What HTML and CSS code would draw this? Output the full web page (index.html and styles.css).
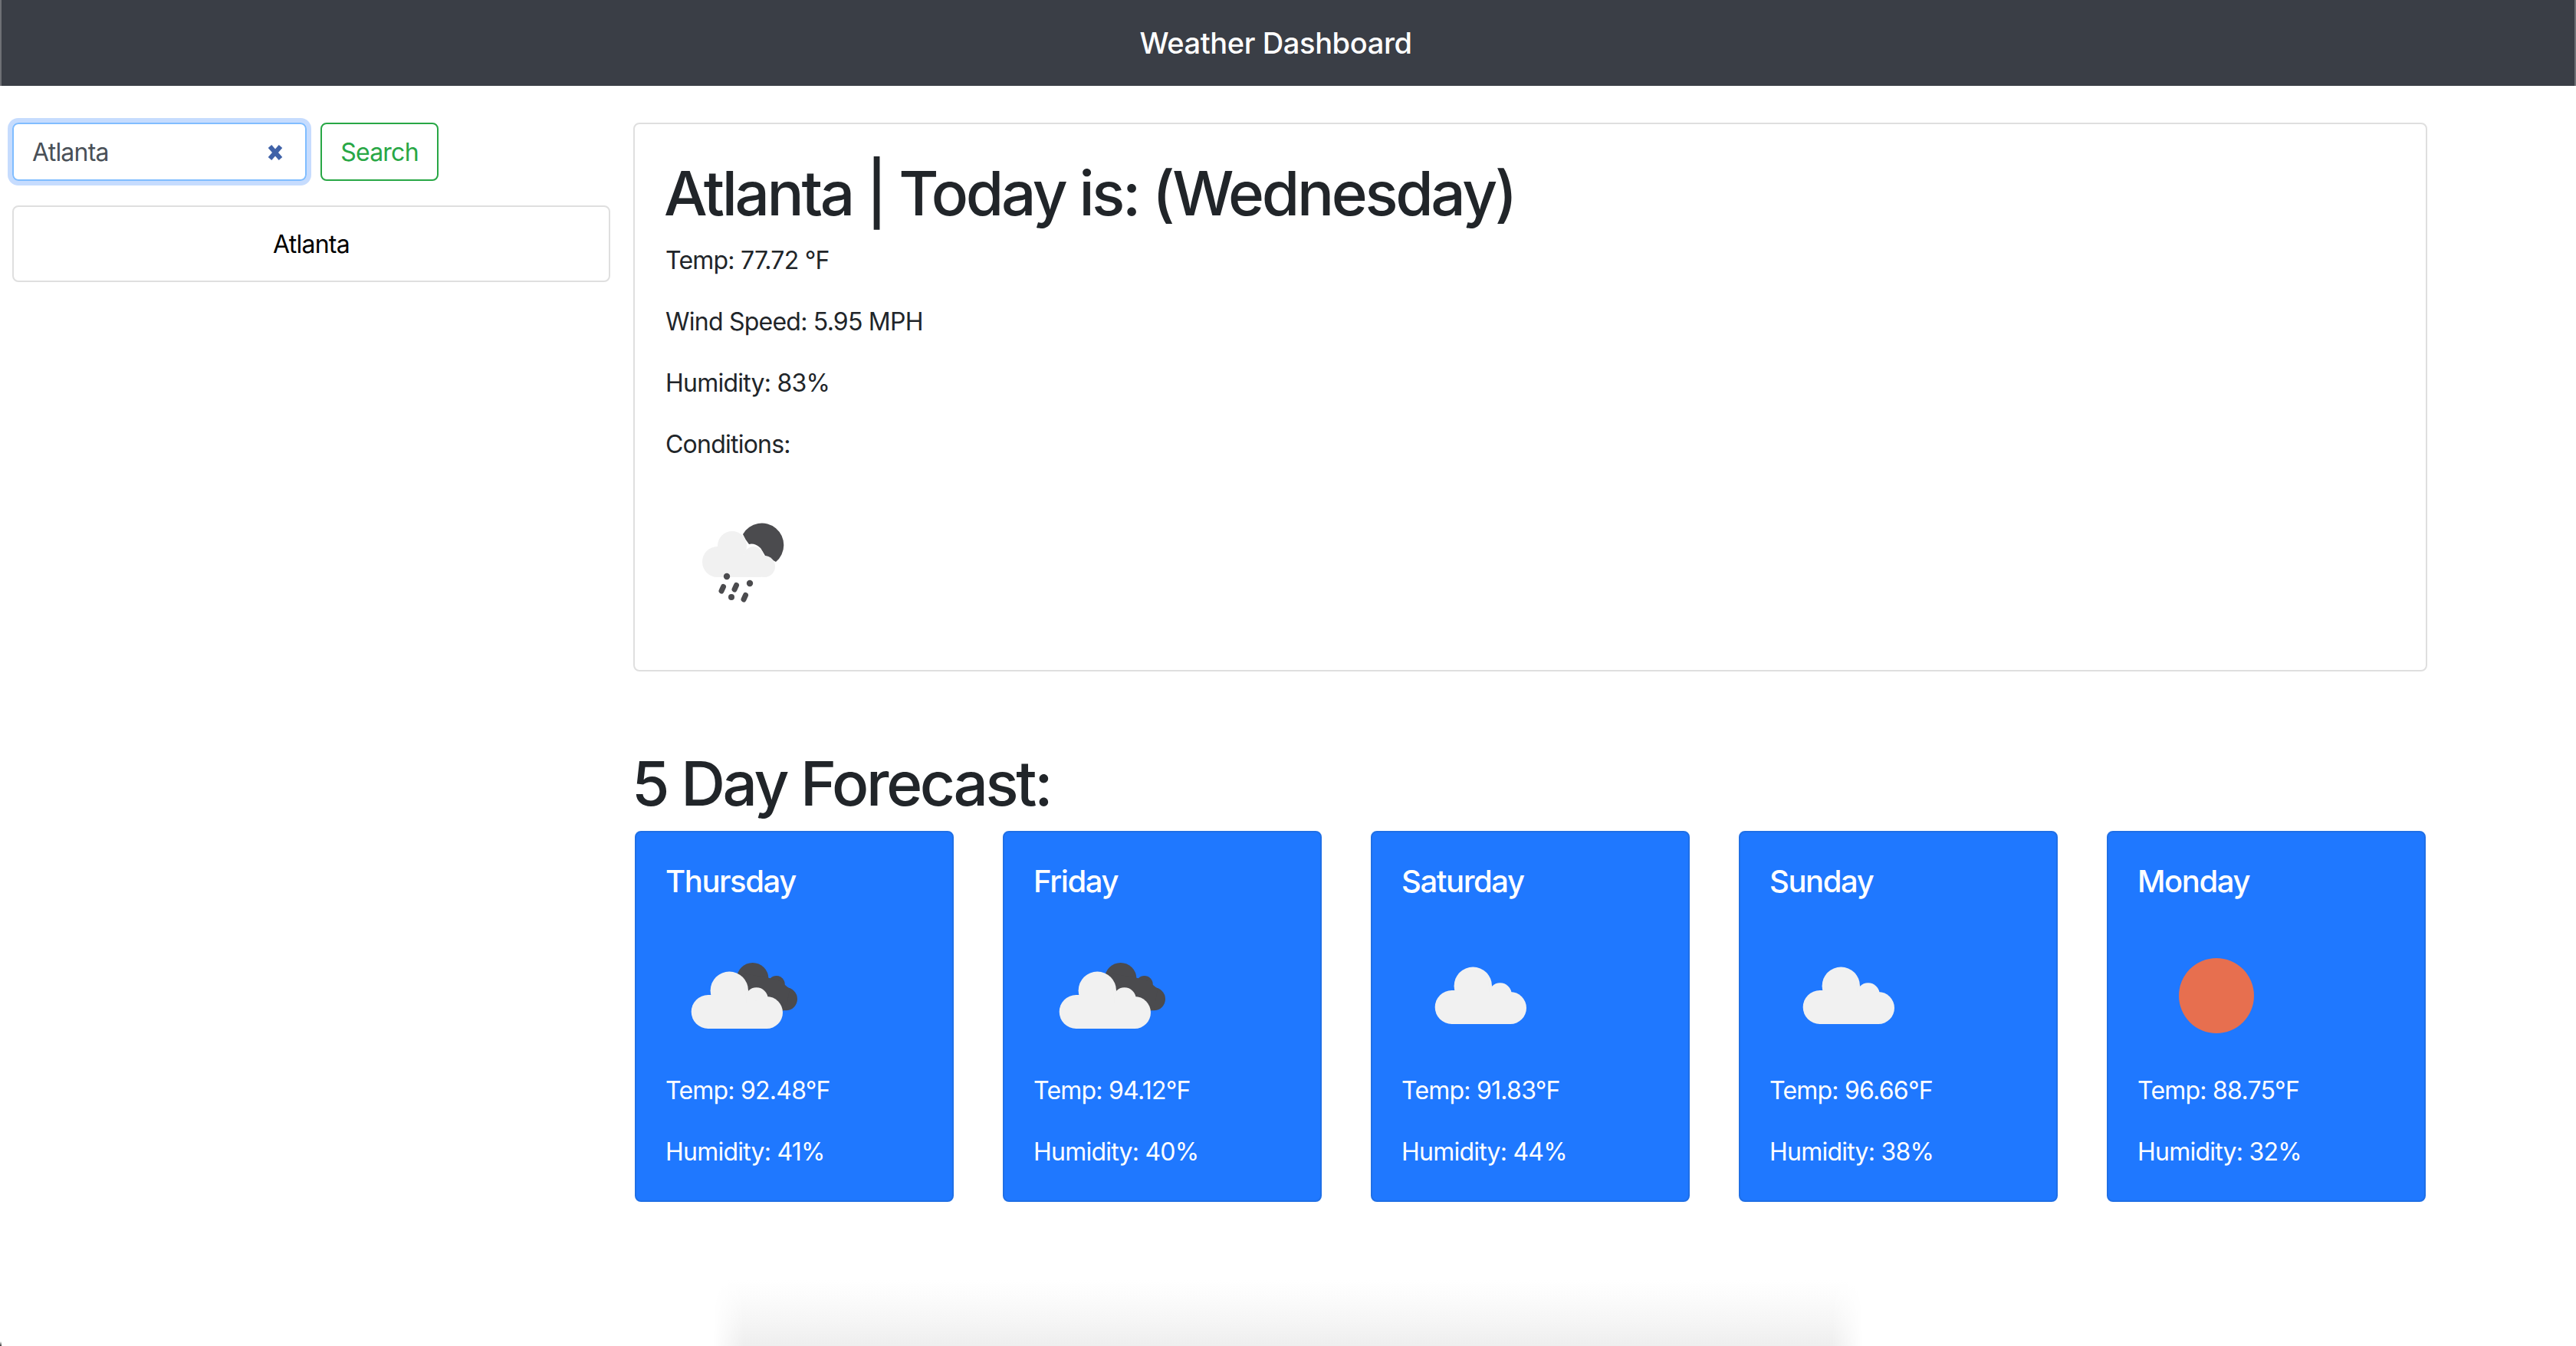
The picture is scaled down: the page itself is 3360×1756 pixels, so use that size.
FILE: index.html
```html
<!DOCTYPE html>
<html lang="en">
<head>
<meta charset="utf-8">
<title>Weather Dashboard</title>
<link rel="stylesheet" href="styles.css">
</head>
<body>
<svg class="defs" width="0" height="0" aria-hidden="true">
  <defs>
    <symbol id="cloud" viewBox="0 0 200 200">
      <circle cx="53.7" cy="130" r="22"/>
      <circle cx="81.3" cy="102.3" r="24.7"/>
      <circle cx="116.7" cy="113.3" r="15"/>
      <circle cx="130" cy="131" r="21"/>
      <path d="M54 108H78V88H100L104 118H130V152H54Z"/>
    </symbol>
    <symbol id="back-cloud" viewBox="0 0 200 200">
      <circle cx="111.7" cy="86.7" r="20.7"/>
      <circle cx="142.7" cy="94" r="11"/>
      <circle cx="155" cy="113.3" r="15"/>
      <path d="M100 80L130 85L148 90L160 100L155 128L135 130L100 110Z"/>
    </symbol>
  </defs>
</svg>
<header class="navbar">Weather Dashboard</header>
<div class="layout">
  <aside class="sidebar">
    <form class="search">
      <div class="field"><span>Atlanta</span>
        <svg class="clear" viewBox="0 0 22 22"><path d="M4 3L18 19M18 3L4 19"/></svg>
      </div>
      <button class="btn" type="button">Search</button>
    </form>
    <div class="history">Atlanta</div>
  </aside>
  <main class="main">
    <section class="today">
      <h1>Atlanta | Today is: (Wednesday)</h1>
      <p>Temp: 77.72 °F</p>
      <p>Wind Speed: 5.95 MPH</p>
      <p>Humidity: 83%</p>
      <p>Conditions:</p>
      <svg class="icon icon-now" viewBox="0 0 200 200">
        <path class="dark" d="M101 63A28.5 28.5 0 1 1 144 99L130 91Q126 84 124 81Q116 74 109 76Q104 70 101 63Z"/>
        <g class="light">
          <circle cx="68" cy="99" r="20"/>
          <circle cx="87" cy="78" r="19"/>
          <circle cx="115" cy="92" r="13"/>
          <circle cx="129" cy="105" r="14"/>
          <path d="M68 82H100V90H125V119H68Z"/>
        </g>
        <g class="dark">
          <circle cx="80" cy="118" r="4.2"/>
          <circle cx="110" cy="127" r="4.2"/>
          <circle cx="86" cy="145" r="4"/>
        </g>
        <g class="rain">
          <path d="M75.5 131.5L73 137M92.5 129.5L90 135M104.5 142.5L102 148"/>
        </g>
      </svg>
    </section>
    <h2>5 Day Forecast:</h2>
    <div class="forecast">
      <article class="day"><h3>Thursday</h3>
        <svg class="icon" viewBox="0 0 200 200"><use href="#back-cloud" class="dark"/><use href="#cloud" class="light"/></svg>
        <p>Temp: 92.48°F</p><p>Humidity: 41%</p></article>
      <article class="day"><h3>Friday</h3>
        <svg class="icon" viewBox="0 0 200 200"><use href="#back-cloud" class="dark"/><use href="#cloud" class="light"/></svg>
        <p>Temp: 94.12°F</p><p>Humidity: 40%</p></article>
      <article class="day"><h3>Saturday</h3>
        <svg class="icon" viewBox="0 0 200 200"><use href="#cloud" class="light" x="10" y="-6"/></svg>
        <p>Temp: 91.83°F</p><p>Humidity: 44%</p></article>
      <article class="day"><h3>Sunday</h3>
        <svg class="icon" viewBox="0 0 200 200"><use href="#cloud" class="light" x="10" y="-6"/></svg>
        <p>Temp: 96.66°F</p><p>Humidity: 38%</p></article>
      <article class="day"><h3>Monday</h3>
        <svg class="icon" viewBox="0 0 200 200"><circle class="sun" cx="101" cy="109" r="49"/></svg>
        <p>Temp: 88.75°F</p><p>Humidity: 32%</p></article>
    </div>
  </main>
</div>
<div class="dock-shadow"></div>
<div class="window-corner"></div>
</body>
</html>
```
FILE: styles.css
```css
* { box-sizing: border-box; }
html, body { height: 100%; }
body {
  margin: 0;
  background: #fff;
  color: #212529;
  font-family: Inter, "Liberation Sans", sans-serif;
  font-size: 32px;
  line-height: 48px;
  letter-spacing: -0.024em;
  overflow: hidden;
  position: relative;
}
.defs { position: absolute; }
.navbar {
  height: 112px;
  background: #3a3e46;
  border-left: 2px solid #6e7075;
  border-right: 2px solid #6e7075;
  color: #fff;
  font-size: 38px;
  font-weight: 500;
  letter-spacing: -0.01em;
  display: flex;
  align-items: center;
  justify-content: center;
  padding-right: 32px;
}
.layout {
  display: flex;
  padding: 48px 194px 0 16px;
  gap: 30px;
}
.sidebar { width: 780px; flex: none; }
.search { display: flex; gap: 18px; }
.field {
  width: 384px;
  height: 76px;
  border: 2px solid #80bdff;
  border-radius: 8px;
  box-shadow: 0 0 0 6px #c6dcfe;
  color: #495057;
  padding: 2px 28px 0 24px;
  display: flex;
  align-items: center;
  justify-content: space-between;
}
.clear { width: 22px; height: 22px; fill: none; stroke: #3f62a8; stroke-width: 6px; }
.btn {
  width: 154px;
  height: 76px;
  border: 2px solid #28a745;
  border-radius: 8px;
  background: #fff;
  color: #28a745;
  font: inherit;
  letter-spacing: inherit;
  padding: 2px 0 0;
}
.history {
  margin-top: 32px;
  height: 100px;
  border: 2px solid #dfdfdf;
  border-radius: 8px;
  color: #000;
  padding-top: 2px;
  display: flex;
  align-items: center;
  justify-content: center;
}
.main { flex: 1; min-width: 0; }
.today {
  height: 716px;
  border: 2px solid #dfdfdf;
  border-radius: 8px;
  padding: 40px;
}
h1 {
  margin: 2px 0 16px -2px;
  font-size: 80px;
  line-height: 96px;
  font-weight: 500;
  letter-spacing: -0.0415em;
}
p { margin: 0 0 32px; }
.icon { display: block; width: 200px; height: 200px; overflow: hidden; }
.icon-now { filter: blur(0.7px); margin-top: -2px; }
.dark { fill: #4b4b4e; }
.light { fill: #f1f1f1; }
.rain { fill: none; stroke: #4b4b4e; stroke-width: 7px; stroke-linecap: round; }
.sun { fill: #e76f4f; }
h2 {
  margin: 98px 0 14px -2px;
  font-size: 80px;
  line-height: 96px;
  font-weight: 500;
  letter-spacing: -0.0415em;
}
.forecast { display: flex; gap: 64px; padding: 0 2px; }
.day {
  width: 416px;
  height: 484px;
  flex: none;
  background: #1f78ff;
  border: 2px solid #1f6fe6;
  border-radius: 8px;
  padding: 40px 40px 40px 38px;
  color: #fff;
}
h3 {
  margin: 0 0 16px;
  font-size: 40px;
  line-height: 48px;
  font-weight: 500;
  letter-spacing: -0.035em;
}
.day .icon { margin: 0 0 9px 2px; }
.day p:last-child { margin-bottom: 0; }
.dock-shadow {
  position: absolute;
  left: 930px;
  right: 930px;
  bottom: 0;
  height: 86px;
  background: linear-gradient(to bottom, #ffffff, #fcfcfc 23%, #f4f4f4 70%, #eeeeee);
  -webkit-mask-image: linear-gradient(to right, transparent, #000 40px, #000 calc(100% - 40px), transparent);
  mask-image: linear-gradient(to right, transparent, #000 40px, #000 calc(100% - 40px), transparent);
}
.window-corner {
  position: absolute;
  left: 0;
  bottom: 0;
  width: 2px;
  height: 6px;
  background: linear-gradient(to bottom, transparent, #333);
}
```
